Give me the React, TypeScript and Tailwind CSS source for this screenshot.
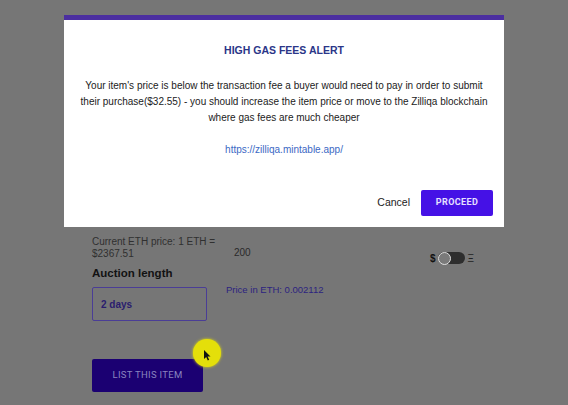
import React from 'react';

const font = "font-['Liberation_Sans',Arial,sans-serif]";

const GasFeeModal: React.FC = () => (
  <div className="absolute inset-0 flex justify-center pt-[15px]">
    <div className="w-[440px] h-[212px] bg-white flex flex-col border-t-[5px] border-[#4b2ea0]">
      <h2 className="mt-[23px] text-center text-[10.5px] leading-[14px] font-bold text-[#2b3688] uppercase">
        High gas fees alert
      </h2>
      <p className="mt-[21px] px-[12px] text-center text-[10px] leading-[16px] text-[#222]">
        Your item's price is below the transaction fee a buyer would need to pay in order to submit their purchase($32.55) - you should increase the item price or move to the Zilliqa blockchain where gas fees are much cheaper
      </p>
      <a className="mt-[16px] text-center text-[10px] leading-[16px] text-[#3b68c4]">https://zilliqa.mintable.app/</a>
      <div className="mt-auto flex items-center justify-end gap-[10px] pr-[11px] pb-[11px]">
        <button className="text-[10.5px] text-[#222] px-[1px]">Cancel</button>
        <button className="w-[72px] h-[26px] rounded-[2px] bg-[#4511e6] text-[#e6e0ff] text-[9px] font-bold tracking-[0.4px] font-['Roboto',sans-serif]">
          PROCEED
        </button>
      </div>
    </div>
  </div>
);

export default function App() {
  return (
    <div className={`relative w-[568px] h-[405px] overflow-hidden bg-[#767676] ${font}`}>
      {/* page behind the dimmed overlay */}
      <div className="flex pl-[92px] pt-[236px]">
        <div className="w-[134px] flex flex-col">
          <p className="w-[124px] text-[10px] leading-[12px] text-[#303030]">Current ETH price: 1 ETH = $2367.51</p>
          <p className="mt-[6px] text-[11.5px] leading-[14px] font-bold text-[#121212]">Auction length</p>
          <div className="mt-[7px] w-[115px] h-[34px] rounded-[2px] border border-[#4a3d96] flex items-center pl-[8px] text-[10px] font-bold text-[#2a1d6e]">
            2 days
          </div>
          <button className="mt-[38px] w-[111px] h-[33px] rounded-[2px] bg-[#1b0072] text-[#8a84bf] text-[9.5px] tracking-[0.3px] font-['Roboto',sans-serif]">
            LIST THIS ITEM
          </button>
        </div>
        <div className="w-[204px] flex flex-col">
          <span className="mt-[11px] pl-[8px] text-[10px] leading-[12px] text-[#2a2a2a]">200</span>
          <span className="mt-[25px] text-[9.5px] leading-[12px] text-[#2c2380]">Price in ETH: 0.002112</span>
        </div>
        <div className="flex items-center gap-[2px] h-[12px] mt-[16px]">
          <span className="text-[10px] font-bold text-[#111]">$</span>
          <div className="w-[27px] h-[12px] rounded-full bg-[#2e2e2e] flex items-center">
            <div className="w-[13px] h-[13px] rounded-full bg-[#7a7a7a] border border-[#e0e0e0]" />
          </div>
          <span className="text-[10px] text-[#222] ml-[1px]">Ξ</span>
        </div>
      </div>

      {/* cursor highlight */}
      <div className="absolute left-[193px] top-[339px] w-[28px] h-[28px] rounded-full bg-[#e4df0a] shadow-[0_0_3px_#e4df0a]" />
      <svg className="absolute left-[204px] top-[350px]" width="8" height="11" viewBox="0 0 8 11">
        <path d="M0 0 L0 9 L2.2 7 L3.8 10.5 L5.2 9.8 L3.6 6.4 L6.5 6.4 Z" fill="#111" />
      </svg>

      <GasFeeModal />
    </div>
  );
}
